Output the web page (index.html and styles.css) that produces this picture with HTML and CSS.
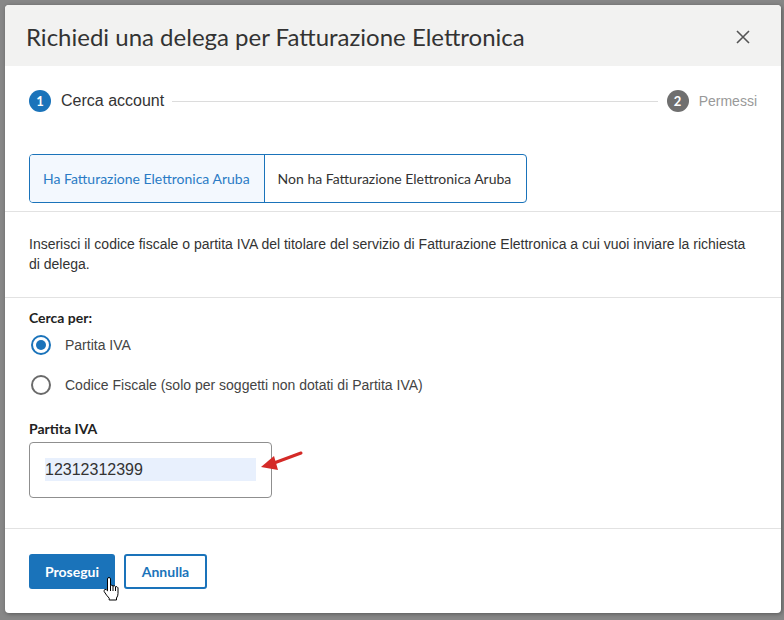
FILE: index.html
```html
<!DOCTYPE html>
<html lang="it">
<head>
    <meta charset="UTF-8">
    <meta name="viewport" content="width=device-width, initial-scale=1">
    <title>Richiedi una delega</title>
    <link rel="stylesheet" href="styles.css">
</head>
<body>
<div class="backdrop">
    <div class="modal">
        <!-- Intestazione -->
        <div class="modal-header">
            <h1>Richiedi una delega per Fatturazione Elettronica</h1>
            <span class="modal-close">
                <svg width="14" height="14" viewBox="0 0 14 14"><path d="M1 1L13 13M13 1L1 13" stroke="#555" stroke-width="1.6" fill="none"/></svg>
            </span>
        </div>

        <!-- Step + scelta -->
        <div class="section steps">
            <div class="stepper">
                <span class="step-num active">1</span>
                <span class="step-label">Cerca account</span>
                <span class="step-line"></span>
                <span class="step-num">2</span>
                <span class="step-label muted">Permessi</span>
            </div>
            <div class="tabs">
                <div class="tab selected">Ha Fatturazione Elettronica Aruba</div>
                <div class="tab">Non ha Fatturazione Elettronica Aruba</div>
            </div>
        </div>

        <div class="section info">
            <p>Inserisci il codice fiscale o partita IVA del titolare del servizio di Fatturazione Elettronica a cui vuoi inviare la richiesta di delega.</p>
        </div>

        <!-- Form ricerca -->
        <div class="section form">
            <div class="label">Cerca per:</div>
            <div class="radios">
                <label class="radio"><span class="dot checked"></span>Partita IVA</label>
                <label class="radio"><span class="dot"></span>Codice Fiscale (solo per soggetti non dotati di Partita IVA)</label>
            </div>
            <div class="label field-label">Partita IVA</div>
            <div class="input-wrap">
                <div class="input"><span class="selected-text">12312312399</span></div>
                <svg class="arrow" width="50" height="24" viewBox="0 0 50 24">
                    <path d="M42 2L15 12" stroke="#d42a27" stroke-width="3" stroke-linecap="round"/>
                    <polygon points="2,16 15,5 19,19" fill="#d42a27"/>
                </svg>
            </div>
        </div>

        <div class="modal-footer">
            <button class="btn primary">Prosegui</button>
            <button class="btn outline">Annulla</button>
            <svg class="cursor" width="18" height="24" viewBox="0 0 18 24">
                <path d="M6 0.5Q7.5 0.5 7.5 2V8.5Q9 7.5 10 9Q11.5 8 12.5 9.8Q14 9 15 10.8V16.5Q15 19 13.5 21V23H6.2V21.2Q3.5 18.5 1.2 14.6Q0.6 13 2 12.4Q3.2 12 4.5 13.8V2Q4.5 0.5 6 0.5Z" fill="#fff" stroke="#000" stroke-width="1"/>
                <path d="M7.5 8.5V14M10 9V14M12.5 9.8V14" stroke="#000" stroke-width="1" fill="none"/>
            </svg>
        </div>
    </div>
</div>
</body>
</html>
```

FILE: styles.css
```css
/* Base */
* { box-sizing: border-box; margin: 0; padding: 0; }
body {
    background: #878787;
    font-family: 'Liberation Sans', Arial, sans-serif;
    color: #333;
    width: 784px;
    height: 620px;
    overflow: hidden;
}
.backdrop {
    padding: 5px 3px 7px 5px;
    height: 620px;
}

/* Modal */
.modal {
    position: relative;
    width: 776px;
    height: 608px;
    background: #fff;
    border-radius: 4px;
    overflow: hidden;
    box-shadow: 1px 1px 4px rgba(0,0,0,0.35);
}
.modal-header {
    height: 61px;
    background: #f2f2f1;
    display: flex;
    align-items: center;
    justify-content: space-between;
    padding: 0 31px 0 21px;
}
.modal-header h1 {
    font-family: Lato, sans-serif;
    font-weight: 400;
    font-size: 24px;
    color: #333;
    padding-top: 2px;
}
.modal-close {
    display: flex;
    padding-top: 2px;
}

.section {
    padding: 0 24px;
    border-bottom: 1px solid #e2e2e2;
}

/* Stepper */
.steps { padding-top: 24px; padding-bottom: 8px; }
.stepper {
    display: flex;
    align-items: center;
    height: 22px;
}
.step-num {
    width: 22px;
    height: 22px;
    border-radius: 50%;
    background: #6f6f6f;
    color: #fff;
    font-family: Lato, sans-serif;
    font-weight: 700;
    font-size: 13px;
    display: flex;
    align-items: center;
    justify-content: center;
    flex-shrink: 0;
}
.step-num.active { background: #1a73ba; }
.step-label {
    margin-left: 10px;
    font-size: 16px;
    color: #333;
}
.step-label.muted { font-size: 14px; color: #999; }
.step-line {
    flex: 1;
    height: 1px;
    background: #dcdcdc;
    margin: 0 9px 0 8px;
}

/* Tabs */
.tabs {
    display: inline-flex;
    margin-top: 42px;
    height: 49px;
    border: 1px solid #1a73ba;
    border-radius: 4px;
    overflow: hidden;
}
.tab {
    display: flex;
    align-items: center;
    padding: 0 15px 0 13px;
    font-family: Lato, sans-serif;
    font-size: 14px;
    color: #333;
}
.tab.selected {
    background: #f3f8fe;
    color: #2a7bc5;
    border-right: 1px solid #1a73ba;
    padding-right: 14px;
}

/* Info */
.info { padding-top: 22px; padding-bottom: 23px; }
.info p {
    font-size: 14px;
    line-height: 20px;
    color: #333;
}

/* Form */
.form { padding-top: 11px; padding-bottom: 30px; }
.label {
    font-family: Lato, sans-serif;
    font-weight: 700;
    font-size: 14px;
    line-height: 18px;
    color: #222;
}
.radios {
    display: flex;
    flex-direction: column;
    gap: 16px;
    margin-top: 6px;
}
.radio {
    display: flex;
    align-items: center;
    height: 24px;
    font-size: 14px;
    color: #444;
}
.dot {
    width: 20px;
    height: 20px;
    border: 2px solid #6a6a6a;
    border-radius: 50%;
    margin: 0 14px 0 2px;
    display: flex;
    align-items: center;
    justify-content: center;
}
.dot.checked { border-color: #1a73ba; }
.dot.checked::after {
    content: "";
    width: 10px;
    height: 10px;
    border-radius: 50%;
    background: #1a73ba;
}
.field-label { margin-top: 23px; }
.input-wrap {
    position: relative;
    margin-top: 4px;
}
.input {
    width: 243px;
    height: 56px;
    border: 1px solid #8f8f8f;
    border-radius: 4px;
    padding: 15px;
}
.selected-text {
    display: block;
    width: 211px;
    height: 23px;
    background: #e8f0fd;
    font-size: 16px;
    line-height: 23px;
    color: #333;
}
.arrow {
    position: absolute;
    left: 230px;
    top: 9px;
}

/* Footer */
.modal-footer {
    position: relative;
    display: flex;
    gap: 9px;
    padding: 25px 24px 0;
}
.btn {
    height: 35px;
    border-radius: 3px;
    font-family: Lato, sans-serif;
    font-weight: 700;
    font-size: 14px;
    cursor: pointer;
}
.btn.primary {
    width: 86px;
    background: #1a73ba;
    border: none;
    color: #fff;
}
.btn.outline {
    width: 83px;
    background: #fff;
    border: 2px solid #1a73ba;
    color: #1a73ba;
}
.cursor {
    position: absolute;
    left: 98px;
    top: 48px;
}
```
